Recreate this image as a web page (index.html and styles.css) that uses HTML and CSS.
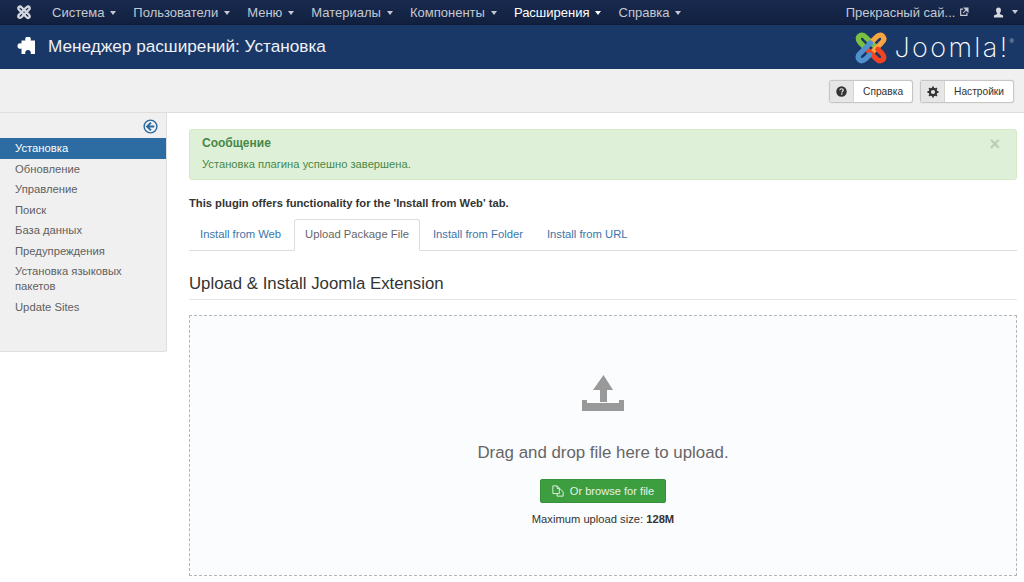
FILE: index.html
```html
<!DOCTYPE html>
<html lang="ru">
<head>
    <meta charset="UTF-8">
    <meta name="viewport" content="width=device-width, initial-scale=1.0">
    <title>Менеджер расширений: Установка</title>
    <link rel="stylesheet" href="styles.css">
</head>
<body>
    <nav class="navbar">
        <svg class="nav-logo" viewBox="0 0 39 38" width="16" height="16">
            <defs>
                <path id="joomlaArm" d="M12 18 L7.500 13.500 Q4 9 7 6.500 Q10.500 4 14 8 L25 19" fill="none" stroke-width="5.600" stroke-linecap="round"/>
            </defs>
            <g stroke="#d3d7df">
                <use href="#joomlaArm"/>
                <use href="#joomlaArm" transform="rotate(90 19.500 19.500)"/>
                <use href="#joomlaArm" transform="rotate(180 19.500 19.500)"/>
                <use href="#joomlaArm" transform="rotate(270 19.500 19.500)"/>
            </g>
        </svg>
        <ul class="nav-menu">
            <li>Система <span class="caret"></span></li>
            <li>Пользователи <span class="caret"></span></li>
            <li>Меню <span class="caret"></span></li>
            <li>Материалы <span class="caret"></span></li>
            <li>Компоненты <span class="caret"></span></li>
            <li class="active">Расширения <span class="caret"></span></li>
            <li>Справка <span class="caret"></span></li>
        </ul>
        <div class="nav-right">
            <span class="site-link">Прекрасный сай...
                <svg viewBox="0 0 12 12" width="10" height="10">
                    <path d="M5 2.500H2v7.500h7.500V7" fill="none" stroke="#c4c9d2" stroke-width="1.400"/>
                    <path d="M6.500 1.200h4.300v4.300zM9.500 2.500 5 7" fill="#c4c9d2" stroke="#c4c9d2" stroke-width="1.300"/>
                </svg>
            </span>
            <span class="user-menu">
                <svg viewBox="0 0 12 12" width="11" height="11">
                    <path d="M6 0.500c1.800 0 2.700 1.300 2.700 3 0 1.300-.6 2.400-1.200 3v1.200l3.500 1.500V11.500H1V9.200l3.500-1.500V6.500c-.6-.6-1.200-1.700-1.200-3 0-1.700.9-3 2.700-3z" fill="#d5d9e0"/>
                </svg>
                <span class="caret"></span>
            </span>
        </div>
    </nav>

    <header class="page-header">
        <svg class="puzzle" viewBox="0 0 18 18" width="18" height="18">
            <path d="M4.500 3.500H8.500A2.800 2.800 0 1 1 13.500 3.500H18V17H13.500A2.800 2.800 0 1 0 8.500 17H4.500V11.500A2.800 2.800 0 1 1 4.500 6.500Z" fill="#fff"/>
        </svg>
        <h1 class="page-title">Менеджер расширений: Установка</h1>
        <div class="brand">
            <svg viewBox="0 0 39 38" width="36" height="35">
                <use href="#joomlaArm" stroke="#7ac143"/>
                <use href="#joomlaArm" stroke="#f9a541" transform="rotate(90 19.500 19.500)"/>
                <use href="#joomlaArm" stroke="#f44321" transform="rotate(180 19.500 19.500)"/>
                <use href="#joomlaArm" stroke="#5091cd" transform="rotate(270 19.500 19.500)"/>
            </svg>
            <span class="brand-name">Joomla!</span><sup class="brand-reg">®</sup>
        </div>
    </header>

    <div class="toolbar">
        <button class="tool-btn">
            <span class="tool-icon">
                <svg viewBox="0 0 12 12" width="11" height="11">
                    <circle cx="6" cy="6" r="5.700" fill="#333"/>
                    <path d="M4.200 4.700C4.300 3.600 5 3 6 3s1.900.6 1.900 1.600c0 1.300-1.500 1.300-1.500 2.400" fill="none" stroke="#eee" stroke-width="1.300"/>
                    <rect x="5.500" y="8" width="1.500" height="1.400" fill="#eee"/>
                </svg>
            </span>
            <span class="tool-label">Справка</span>
        </button>
        <button class="tool-btn">
            <span class="tool-icon">
                <svg viewBox="0 0 12 12" width="12" height="12">
                    <circle cx="6" cy="6" r="3.200" fill="none" stroke="#333" stroke-width="2.200"/>
                    <path d="M6 .5v2M6 9.500v2M.5 6h2M9.500 6h2M2.100 2.100l1.400 1.400M8.500 8.500l1.400 1.400M9.900 2.100 8.500 3.500M3.500 8.500 2.100 9.900" stroke="#333" stroke-width="1.800"/>
                </svg>
            </span>
            <span class="tool-label">Настройки</span>
        </button>
    </div>

    <div class="layout">
        <aside class="sidebar">
            <div class="sidebar-toggle">
                <svg viewBox="0 0 16 16" width="15" height="15">
                    <circle cx="8" cy="8" r="6.800" fill="none" stroke="#2a69a0" stroke-width="1.500"/>
                    <path d="M8.500 3.800 4.300 8l4.200 4.200M4.500 8h7.500" fill="none" stroke="#2a69a0" stroke-width="2"/>
                </svg>
            </div>
            <ul class="side-menu">
                <li class="active">Установка</li>
                <li>Обновление</li>
                <li>Управление</li>
                <li>Поиск</li>
                <li>База данных</li>
                <li>Предупреждения</li>
                <li>Установка языковых пакетов</li>
                <li>Update Sites</li>
            </ul>
        </aside>

        <main class="content">
            <div class="alert">
                <span class="alert-close">×</span>
                <h4>Сообщение</h4>
                <p>Установка плагина успешно завершена.</p>
            </div>
            <p class="plugin-note">This plugin offers functionality for the 'Install from Web' tab.</p>
            <ul class="tabs">
                <li>Install from Web</li>
                <li class="active">Upload Package File</li>
                <li>Install from Folder</li>
                <li>Install from URL</li>
            </ul>
            <h2 class="section-title">Upload &amp; Install Joomla Extension</h2>
            <div class="dropzone">
                <svg class="upload-icon" viewBox="0 0 42 36" width="42" height="36">
                    <path d="M21.500 0 31 15H25V27H18V15H11z" fill="#999"/>
                    <path d="M0 25H5V28H37V25H42V36H0z" fill="#999"/>
                </svg>
                <p class="drop-text">Drag and drop file here to upload.</p>
                <button class="browse-btn">
                    <svg viewBox="0 0 14 14" width="12" height="12">
                        <path d="M1 1h5l2.500 2.500V10H1z M6 1v3h2.500 M8.500 5H10l3 3v5H6v-3" fill="none" stroke="#e4f2e4" stroke-width="1.100"/>
                    </svg>
                    Or browse for file
                </button>
                <p class="max-size">Maximum upload size: <strong>128M</strong></p>
            </div>
        </main>
    </div>
</body>
</html>
```

FILE: styles.css
```css
* {
    box-sizing: border-box;
}
html, body {
    height: 582px;
    overflow: hidden;
}
body {
    margin: 0;
    font-family: "Liberation Sans", Arial, sans-serif;
    background-color: #fff;
    color: #333;
}
ul {
    list-style: none;
    margin: 0;
    padding: 0;
}

/* top bar */
.navbar {
    display: flex;
    align-items: center;
    height: 25px;
    background: linear-gradient(#182a4e, #12203f);
    border-bottom: 1px solid #0f1b36;
    padding-left: 16px;
    color: #c4c9d2;
    font-size: 13px;
}
.nav-logo {
    flex: none;
    margin-right: 20px;
}
.nav-menu {
    display: flex;
    gap: 17.400px;
}
.nav-menu .active {
    color: #fff;
}
.caret {
    display: inline-block;
    width: 0;
    height: 0;
    margin-left: 2px;
    vertical-align: middle;
    border-top: 4px solid #c4c9d2;
    border-left: 3.500px solid transparent;
    border-right: 3.500px solid transparent;
}
.nav-menu .active .caret {
    border-top-color: #fff;
}
.nav-right {
    display: flex;
    align-items: center;
    margin-left: auto;
    padding-right: 6px;
}
.site-link {
    margin-right: 24px;
}
.user-menu {
    display: flex;
    align-items: center;
    gap: 6px;
}

/* blue title bar */
.page-header {
    display: flex;
    align-items: center;
    height: 44px;
    background-color: #1a3867;
    padding-left: 17px;
    color: #fff;
}
.puzzle {
    flex: none;
    margin: 0 13px 2px 0;
}
.page-title {
    margin: 0 0 1px;
    font-size: 17.200px;
    font-weight: normal;
    color: #eef0f4;
}
.brand {
    display: flex;
    align-items: center;
    margin-left: auto;
    padding-right: 10px;
}
.brand-name {
    margin-left: 5px;
    font-family: Inter, "Liberation Sans", sans-serif;
    font-size: 27px;
    font-weight: 200;
    letter-spacing: 2.400px;
    line-height: 1;
}
.brand-reg {
    align-self: flex-start;
    margin-top: 8px;
    font-size: 6px;
    color: #c4c9d2;
}

/* toolbar */
.toolbar {
    display: flex;
    justify-content: flex-end;
    gap: 7px;
    height: 44px;
    padding: 11px 10px 0 0;
    background-color: #f0f0f0;
    border-bottom: 1px solid #dedede;
}
.tool-btn {
    display: flex;
    height: 23px;
    padding: 0;
    border: 1px solid #c6c6c6;
    border-radius: 3px;
    box-shadow: 0 0 1px #bbb;
    background-color: #fff;
    font-family: inherit;
    font-size: 10.200px;
    color: #333;
}
.tool-icon {
    display: flex;
    align-items: center;
    justify-content: center;
    width: 24px;
    height: 100%;
    background-color: #e6e6e6;
    border-right: 1px solid #d4d4d4;
}
.tool-label {
    align-self: center;
    padding: 0 9px;
}

/* sidebar + content */
.layout {
    display: flex;
    align-items: flex-start;
}
.sidebar {
    flex: none;
    width: 167px;
    height: 239px;
    background-color: #f0f0f0;
    border-right: 1px solid #dedede;
    border-bottom: 1px solid #dedede;
    border-bottom-right-radius: 3px;
}
.sidebar-toggle {
    display: flex;
    justify-content: flex-end;
    height: 25px;
    padding: 6px 8px 0 0;
}
.side-menu {
    font-size: 11.250px;
    line-height: 15px;
    color: #5f5f5f;
}
.side-menu li {
    padding: 2.500px 15px 3px;
}
.side-menu .active {
    height: 21px;
    padding-top: 3px;
    background-color: #2d6ca2;
    color: #fff;
}
.content {
    flex: 1;
    padding: 16px 7px 0 22px;
}
.alert {
    position: relative;
    height: 51px;
    padding: 6px 12px;
    background-color: #dff0d8;
    border: 1px solid #d6e9c6;
    border-radius: 3px;
    color: #468847;
}
.alert h4 {
    margin: 0;
    font-size: 12px;
    line-height: 15px;
}
.alert p {
    margin: 6px 0 0;
    font-size: 11.200px;
    line-height: 14px;
}
.alert-close {
    position: absolute;
    top: 5px;
    right: 16px;
    font-size: 18px;
    font-weight: bold;
    line-height: 18px;
    color: #b9cdb3;
}
.plugin-note {
    margin: 16px 0 0;
    font-size: 11.200px;
    font-weight: bold;
    line-height: 14px;
}
.tabs {
    display: flex;
    height: 32px;
    margin-top: 9px;
    border-bottom: 1px solid #ddd;
    font-size: 11.250px;
    color: #3a76aa;
}
.tabs li {
    height: 32px;
    padding: 8px 10px 0;
    margin-right: 2px;
    border: 1px solid transparent;
    border-radius: 3px 3px 0 0;
}
.tabs .active {
    background-color: #fff;
    border-color: #ddd #ddd #fff;
    color: #666;
}
.section-title {
    margin: 23px 0 0;
    padding-bottom: 5px;
    border-bottom: 1px solid #e5e5e5;
    font-size: 16.800px;
    font-weight: normal;
    line-height: 20px;
}
.dropzone {
    display: flex;
    flex-direction: column;
    align-items: center;
    height: 261px;
    margin-top: 15px;
    padding-top: 59px;
    background-color: #fbfcfd;
    border: 1px dashed #b5b5b5;
}
.upload-icon {
    flex: none;
}
.drop-text {
    margin: 32px 0 0;
    font-size: 16.880px;
    line-height: 20px;
    color: #666;
}
.browse-btn {
    display: flex;
    align-items: center;
    gap: 6px;
    height: 24px;
    margin-top: 16px;
    padding: 0 11px;
    background-color: #3d9e40;
    border: 1px solid #37913a;
    border-radius: 2px;
    font-family: inherit;
    font-size: 11.100px;
    color: #e4f2e4;
}
.max-size {
    margin: 10px 0 0;
    font-size: 11.200px;
    line-height: 12px;
}
```
